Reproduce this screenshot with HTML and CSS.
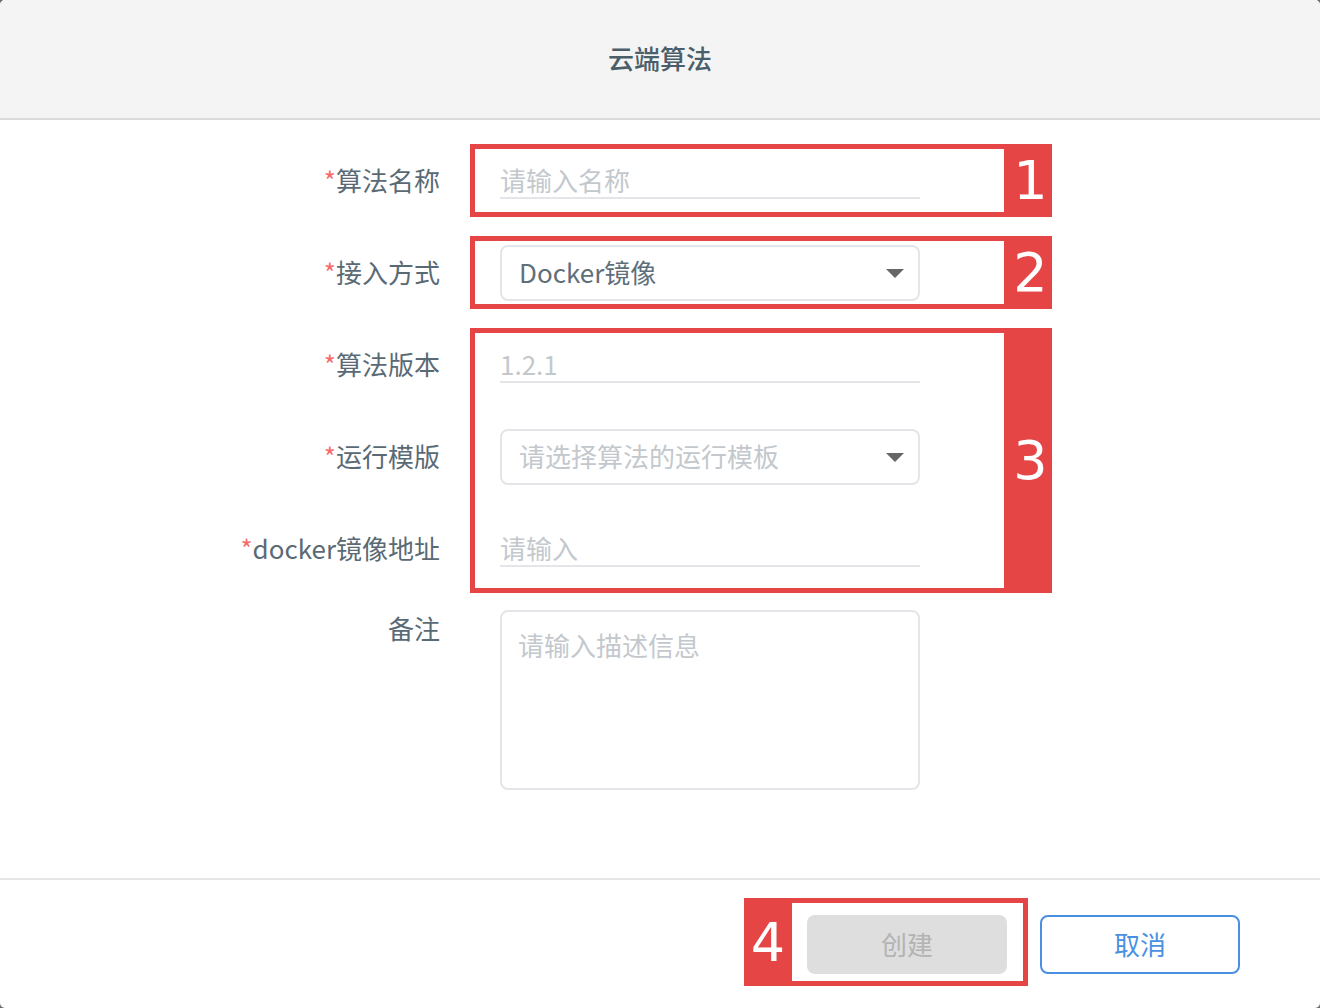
FILE: index.html
```html
<!DOCTYPE html>
<html lang="zh-CN">
<head>
    <meta charset="UTF-8">
    <meta name="viewport" content="width=device-width, initial-scale=1.0">
    <title>云端算法</title>
    <link rel="stylesheet" href="styles.css">
</head>
<body>

<div class="dialog">
    <div class="dialog-header">云端算法</div>

    <div class="dialog-body">
        <div class="form">
            <div class="form-row">
                <label class="form-label"><span class="star">*</span>算法名称</label>
                <input class="line-input" type="text" placeholder="请输入名称">
            </div>
            <div class="form-row">
                <label class="form-label"><span class="star">*</span>接入方式</label>
                <div class="select">
                    <span>Docker镜像</span>
                    <svg class="caret" width="18" height="9" viewBox="0 0 18 9"><path d="M0 0h18L9 9z"/></svg>
                </div>
            </div>
            <div class="form-row">
                <label class="form-label"><span class="star">*</span>算法版本</label>
                <input class="line-input" type="text" placeholder="1.2.1">
            </div>
            <div class="form-row">
                <label class="form-label"><span class="star">*</span>运行模版</label>
                <div class="select empty">
                    <span>请选择算法的运行模板</span>
                    <svg class="caret" width="18" height="9" viewBox="0 0 18 9"><path d="M0 0h18L9 9z"/></svg>
                </div>
            </div>
            <div class="form-row">
                <label class="form-label"><span class="star">*</span>docker镜像地址</label>
                <input class="line-input" type="text" placeholder="请输入">
            </div>
            <div class="form-row form-row-top">
                <label class="form-label">备注</label>
                <textarea class="textarea" placeholder="请输入描述信息"></textarea>
            </div>
        </div>
    </div>

    <div class="dialog-footer">
        <button class="btn btn-create" disabled>创建</button>
        <button class="btn btn-cancel">取消</button>
    </div>

    <!-- Markierungen -->
    <div class="mark mark-1"><div class="mark-frame"></div><div class="mark-tag">1</div></div>
    <div class="mark mark-2"><div class="mark-frame"></div><div class="mark-tag">2</div></div>
    <div class="mark mark-3"><div class="mark-frame"></div><div class="mark-tag">3</div></div>
    <div class="mark mark-4 tag-left"><div class="mark-tag">4</div><div class="mark-frame"></div></div>
</div>

</body>
</html>
```

FILE: styles.css
```css
body {
    margin: 0;
    padding: 0;
    background-color: #6b6b6b;
    font-family: "Noto Sans CJK SC", "Noto Sans", sans-serif;
}
.dialog {
    position: relative;
    width: 1320px;
    height: 1008px;
    background-color: #fff;
    border-radius: 5px;
    overflow: hidden;
    display: flex;
    flex-direction: column;
}
.dialog-header {
    height: 120px;
    box-sizing: border-box;
    padding-bottom: 4px;
    flex-shrink: 0;
    background-color: #f4f4f4;
    border-bottom: 2px solid #dadada;
    display: flex;
    align-items: center;
    justify-content: center;
    font-size: 26px;
    font-weight: 500;
    color: #4b5f6b;
}
.dialog-body {
    flex: 1;
    padding-top: 33px;
}
.form {
    display: flex;
    flex-direction: column;
    gap: 36px;
}
.form-row {
    display: grid;
    grid-template-columns: 440px 420px;
    column-gap: 60px;
    min-height: 56px;
    align-items: center;
}
.form-row-top {
    align-items: start;
    margin-top: -3px;
}
.form-label {
    text-align: right;
    font-size: 26px;
    line-height: 36px;
    color: #5a6a75;
    padding-bottom: 2px;
}
.star {
    color: #f56c6c;
    font-size: 26px;
}
.line-input {
    align-self: start;
    width: 420px;
    height: 46px;
    box-sizing: border-box;
    padding: 8px 0 0;
    border: none;
    border-bottom: 2px solid #e3e5e8;
    background: transparent;
    outline: none;
    font-family: inherit;
    font-size: 26px;
    color: #5f6f7a;
}
.line-input::placeholder,
.textarea::placeholder {
    color: #c3c8cd;
}
.select {
    height: 56px;
    box-sizing: border-box;
    border: 2px solid #e3e5e8;
    border-radius: 8px;
    display: flex;
    align-items: center;
    justify-content: space-between;
    padding: 0 14px 4px 17px;
    font-size: 26px;
    color: #5f6f7a;
}
.select.empty {
    color: #c3c8cd;
}
.caret {
    fill: #666;
    margin-top: 4px;
}
.textarea {
    width: 420px;
    height: 180px;
    box-sizing: border-box;
    border: 2px solid #e3e5e8;
    border-radius: 8px;
    padding: 15px 16px;
    resize: none;
    outline: none;
    font-family: inherit;
    font-size: 26px;
    line-height: 36px;
    color: #5f6f7a;
}
.dialog-footer {
    height: 128px;
    flex-shrink: 0;
    border-top: 2px solid #e6e6e6;
    display: flex;
    align-items: center;
    justify-content: flex-end;
    gap: 33px;
    padding-right: 80px;
}
.btn {
    width: 200px;
    height: 59px;
    box-sizing: border-box;
    border-radius: 8px;
    font-family: inherit;
    font-size: 26px;
    padding-bottom: 3px;
    cursor: pointer;
}
.btn-create {
    background-color: #dedede;
    color: #b3b3b3;
    border: none;
    cursor: not-allowed;
}
.btn-cancel {
    background-color: #fff;
    border: 2px solid #4a90e2;
    color: #4a90e2;
}

/* rote Markierungen über dem Formular */
.mark {
    position: absolute;
    display: flex;
}
.mark-frame {
    flex: 1;
    border: 5px solid #e54545;
    border-right: none;
}
.mark-tag {
    width: 48px;
    box-sizing: border-box;
    padding-left: 5px;
    background-color: #e54545;
    color: #fff;
    font-family: "DejaVu Sans", sans-serif;
    font-size: 54px;
    display: flex;
    align-items: center;
    justify-content: center;
}
.tag-left .mark-tag {
    padding-left: 0;
}
.tag-left .mark-frame {
    border-right: 5px solid #e54545;
    border-left: none;
}
.mark-1 { left: 470px; top: 144px; width: 582px; height: 73px; }
.mark-2 { left: 470px; top: 236px; width: 582px; height: 73px; }
.mark-3 { left: 470px; top: 328px; width: 582px; height: 265px; }
.mark-4 { left: 744px; top: 898px; width: 284px; height: 88px; }
```
